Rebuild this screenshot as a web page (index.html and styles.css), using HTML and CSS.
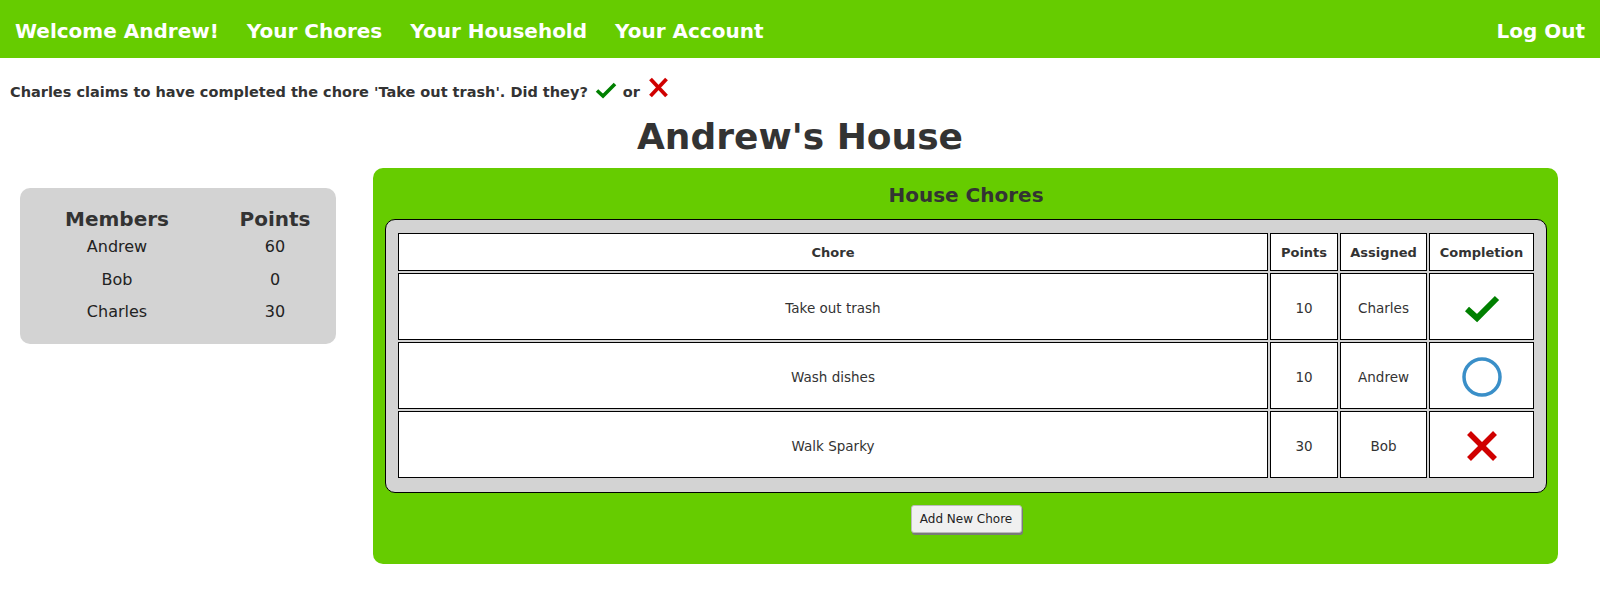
FILE: index.html
```html
<!DOCTYPE html>
<html>
<head>
<meta charset="utf-8">
<title>Andrew's House</title>
<link rel="stylesheet" href="styles.css">
</head>
<body>
<nav class="topnav">
  <div class="nav-left">
    <a class="nav-link" href="#">Welcome Andrew!</a>
    <a class="nav-link" href="#">Your Chores</a>
    <a class="nav-link" href="#">Your Household</a>
    <a class="nav-link" href="#">Your Account</a>
  </div>
  <a class="nav-link" href="#">Log Out</a>
</nav>

<div class="notice">
  <span>Charles claims to have completed the chore 'Take out trash'. Did they?</span>
  <svg class="notice-check" width="22" height="18" viewBox="0 0 22 18"><polyline points="2,9.5 8,15 20,3" fill="none" stroke="#008000" stroke-width="3.6"/></svg>
  <span class="notice-or">or</span>
  <svg class="notice-x" width="21" height="23" viewBox="0 0 21 23"><line x1="2.5" y1="3" x2="18.5" y2="20" stroke="#d00000" stroke-width="3.8"/><line x1="18.5" y1="3" x2="2.5" y2="20" stroke="#d00000" stroke-width="3.8"/></svg>
</div>

<h1 class="house-title">Andrew's House</h1>

<div class="main">
  <div class="members">
    <div class="mem-head">Members</div>
    <div class="mem-head">Points</div>
    <div class="mem-cell">Andrew</div>
    <div class="mem-cell">60</div>
    <div class="mem-cell">Bob</div>
    <div class="mem-cell">0</div>
    <div class="mem-cell">Charles</div>
    <div class="mem-cell">30</div>
  </div>

  <div class="chores-panel">
    <h2 class="panel-title">House Chores</h2>
    <div class="table-wrap">
      <table class="chores">
        <thead>
          <tr>
            <th>Chore</th>
            <th class="c-points">Points</th>
            <th class="c-assigned">Assigned</th>
            <th class="c-completion">Completion</th>
          </tr>
        </thead>
        <tbody>
          <tr>
            <td>Take out trash</td>
            <td>10</td>
            <td>Charles</td>
            <td><svg class="ico" width="36" height="30" viewBox="0 0 36 30"><polyline points="3,16 13,25 33,5" fill="none" stroke="#008000" stroke-width="6"/></svg></td>
          </tr>
          <tr>
            <td>Wash dishes</td>
            <td>10</td>
            <td>Andrew</td>
            <td><svg class="ico" width="42" height="42" viewBox="0 0 42 42"><circle cx="21" cy="21" r="18" fill="none" stroke="#3a8fc8" stroke-width="3.5"/></svg></td>
          </tr>
          <tr>
            <td>Walk Sparky</td>
            <td>30</td>
            <td>Bob</td>
            <td><svg class="ico" width="34" height="34" viewBox="0 0 34 34"><line x1="4" y1="4" x2="30" y2="30" stroke="#d00000" stroke-width="5.5"/><line x1="30" y1="4" x2="4" y2="30" stroke="#d00000" stroke-width="5.5"/></svg></td>
          </tr>
        </tbody>
      </table>
    </div>
    <div class="btn-row">
      <button class="add-btn" type="button">Add New Chore</button>
    </div>
  </div>
</div>
</body>
</html>
```

FILE: styles.css
```css
* { box-sizing: border-box; }

body {
  margin: 0;
  font-family: "DejaVu Sans", Verdana, sans-serif;
  color: #333;
  background: #fff;
}

.topnav {
  height: 58px;
  background: #66cc00;
  display: flex;
  align-items: center;
  justify-content: space-between;
  padding: 3px 15px 0;
}

.nav-left {
  display: flex;
  gap: 28px;
}

.nav-link {
  color: #fff;
  text-decoration: none;
  font-weight: bold;
  font-size: 20px;
}

.notice {
  height: 47px;
  display: flex;
  align-items: flex-end;
  padding: 0 10px 5px;
  font-size: 14.5px;
  font-weight: bold;
  color: #333;
}

.notice-check {
  margin-left: 7px;
  margin-bottom: 1px;
}

.notice-or {
  margin-left: 6px;
}

.notice-x {
  margin-left: 8px;
  margin-bottom: 1px;
}

.house-title {
  margin: 11px 0 0;
  text-align: center;
  font-size: 36px;
  line-height: 42px;
  font-weight: bold;
  color: #333;
}

.main {
  display: flex;
  align-items: flex-start;
  margin-top: 10px;
  padding-left: 20px;
}

.members {
  margin-top: 20px;
  width: 316px;
  background: #d3d3d3;
  border-radius: 10px;
  padding: 19px 0 15px;
  display: grid;
  grid-template-columns: 194px 122px;
  text-align: center;
}

.mem-head {
  font-size: 20px;
  font-weight: bold;
  line-height: 24px;
  color: #333;
}

.mem-cell {
  font-size: 16px;
  line-height: 32.5px;
  color: #222;
}

.chores-panel {
  margin-left: 37px;
  width: 1185px;
  background: #66cc00;
  border-radius: 10px;
  padding: 15px 11px 31px 12px;
}

.panel-title {
  margin: 0 0 12px;
  text-align: center;
  font-size: 20px;
  line-height: 24px;
  font-weight: bold;
  color: #333;
}

.table-wrap {
  background: #d3d3d3;
  border: 1px solid #000;
  border-radius: 10px;
  padding: 11px 10px 12px;
}

.chores {
  width: 100%;
  border-collapse: separate;
  border-spacing: 2px;
  font-size: 13.5px;
  color: #333;
}

.chores th,
.chores td {
  background: #fff;
  border: 1px solid #000;
  text-align: center;
  vertical-align: middle;
  padding: 0;
}

.chores th {
  height: 38px;
  font-weight: bold;
  font-size: 13px;
}

.chores td {
  height: 67px;
  padding-top: 3px;
}

.chores th.c-points { width: 68px; }
.chores th.c-assigned { width: 87px; }
.chores th.c-completion { width: 105px; }

.ico {
  display: block;
  margin: 0 auto;
}

.btn-row {
  display: flex;
  justify-content: center;
  margin-top: 12px;
}

.add-btn {
  width: 111px;
  height: 28px;
  font-family: "DejaVu Sans", Verdana, sans-serif;
  font-size: 12px;
  color: #222;
  background: #f0f0f0;
  border: 1px solid #bbb;
  border-radius: 3px;
  box-shadow: 1px 2px 0 #7a7a7a;
  padding: 0;
}
```
